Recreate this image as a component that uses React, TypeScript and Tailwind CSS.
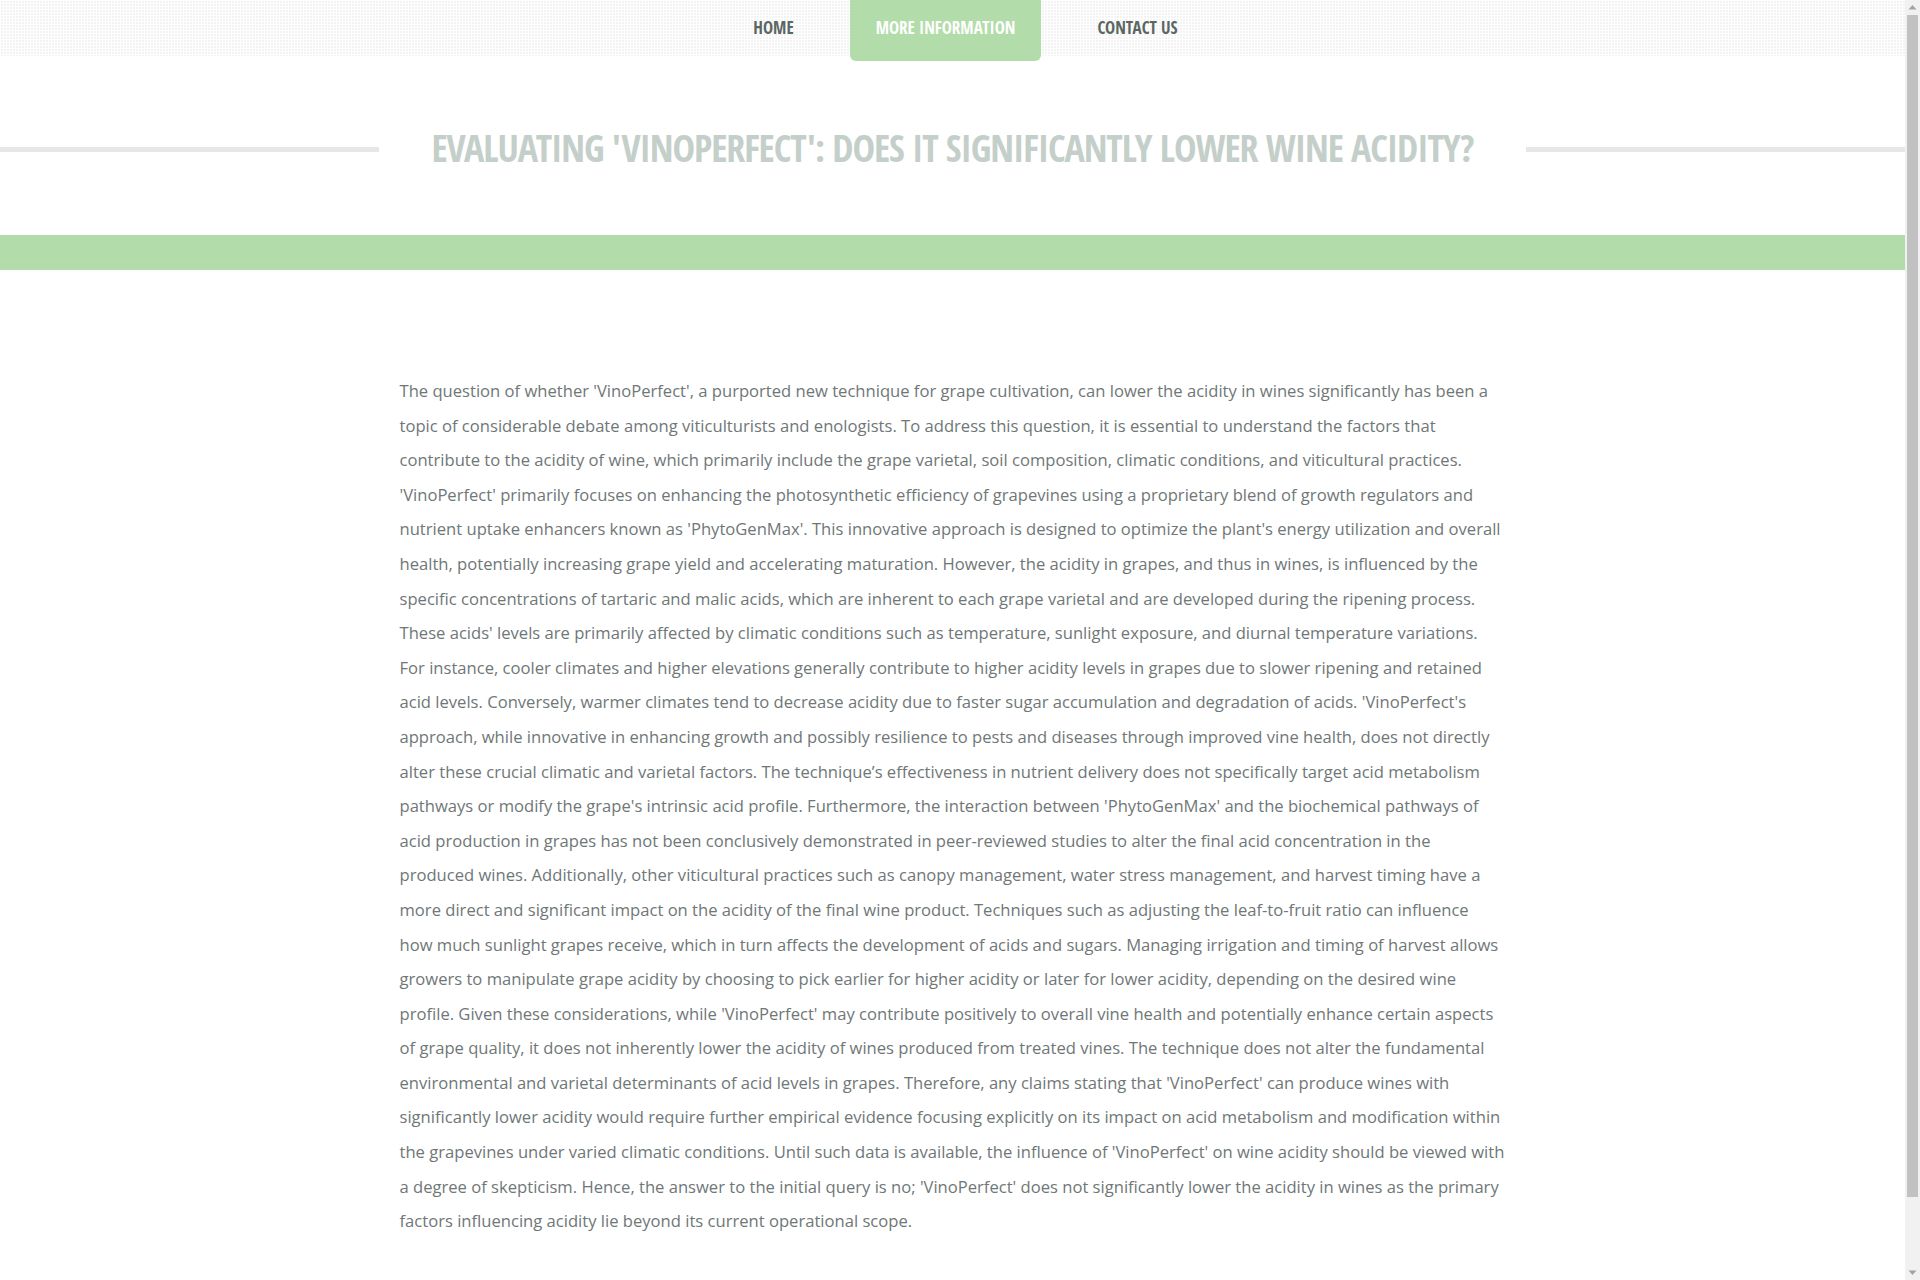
import React from "react";

const paragraph =
	"The question of whether 'VinoPerfect', a purported new technique for grape cultivation, can lower the acidity in wines significantly has been a topic of considerable debate among viticulturists and enologists. To address this question, it is essential to understand the factors that contribute to the acidity of wine, which primarily include the grape varietal, soil composition, climatic conditions, and viticultural practices. 'VinoPerfect' primarily focuses on enhancing the photosynthetic efficiency of grapevines using a proprietary blend of growth regulators and nutrient uptake enhancers known as 'PhytoGenMax'. This innovative approach is designed to optimize the plant's energy utilization and overall health, potentially increasing grape yield and accelerating maturation. However, the acidity in grapes, and thus in wines, is influenced by the specific concentrations of tartaric and malic acids, which are inherent to each grape varietal and are developed during the ripening process. These acids' levels are primarily affected by climatic conditions such as temperature, sunlight exposure, and diurnal temperature variations. For instance, cooler climates and higher elevations generally contribute to higher acidity levels in grapes due to slower ripening and retained acid levels. Conversely, warmer climates tend to decrease acidity due to faster sugar accumulation and degradation of acids. 'VinoPerfect's approach, while innovative in enhancing growth and possibly resilience to pests and diseases through improved vine health, does not directly alter these crucial climatic and varietal factors. The technique\u2019s effectiveness in nutrient delivery does not specifically target acid metabolism pathways or modify the grape's intrinsic acid profile. Furthermore, the interaction between 'PhytoGenMax' and the biochemical pathways of acid production in grapes has not been conclusively demonstrated in peer-reviewed studies to alter the final acid concentration in the produced wines. Additionally, other viticultural practices such as canopy management, water stress management, and harvest timing have a more direct and significant impact on the acidity of the final wine product. Techniques such as adjusting the leaf-to-fruit ratio can influence how much sunlight grapes receive, which in turn affects the development of acids and sugars. Managing irrigation and timing of harvest allows growers to manipulate grape acidity by choosing to pick earlier for higher acidity or later for lower acidity, depending on the desired wine profile. Given these considerations, while 'VinoPerfect' may contribute positively to overall vine health and potentially enhance certain aspects of grape quality, it does not inherently lower the acidity of wines produced from treated vines. The technique does not alter the fundamental environmental and varietal determinants of acid levels in grapes. Therefore, any claims stating that 'VinoPerfect' can produce wines with significantly lower acidity would require further empirical evidence focusing explicitly on its impact on acid metabolism and modification within the grapevines under varied climatic conditions. Until such data is available, the influence of 'VinoPerfect' on wine acidity should be viewed with a degree of skepticism. Hence, the answer to the initial query is no; 'VinoPerfect' does not significantly lower the acidity in wines as the primary factors influencing acidity lie beyond its current operational scope.";

const condensed = "font-['Open_Sans_Condensed','Open_Sans','Liberation_Sans_Narrow',sans-serif] font-bold font-stretch-condensed";

// page scrollbar as seen in the screenshot
const Scrollbar = () => (
	<div className="fixed top-0 right-0 flex h-screen w-[15px] flex-col items-center bg-[#f1f1f1]">
		<svg width="15" height="15" viewBox="0 0 15 15" className="shrink-0">
			<path d="M3.5 9.5 L7.5 5 L11.5 9.5 Z" fill="#a3a3a3" />
		</svg>
		<div className="h-[1182px] w-[11px] bg-[#c1c1c1]" />
		<div className="flex-1" />
		<svg width="15" height="15" viewBox="0 0 15 15" className="shrink-0">
			<path d="M3.5 5.5 L7.5 10 L11.5 5.5 Z" fill="#a3a3a3" />
		</svg>
	</div>
);

const App = () => {
	return (
		<div className="min-h-[1350px] bg-white pr-[15px] font-['Open_Sans',sans-serif]">
			{/* top nav */}
			<div className="h-[56px] bg-[#f3f3f3] bg-[linear-gradient(90deg,#ffffff_1px,transparent_1px),linear-gradient(#ffffff_1px,transparent_1px)] bg-[size:3px_3px]">
				<ul className="flex justify-center gap-[30px] pl-[26px]">
					<li>
						<a className={`${condensed} flex h-[56px] items-center px-[26px] text-[17px] uppercase text-[#5b6663]`}>
							Home
						</a>
					</li>
					<li>
						<a className={`${condensed} flex h-[61px] items-center rounded-b-[6px] bg-[#b2dcaa] px-[26px] pb-[5px] text-[17px] uppercase text-white`}>
							More Information
						</a>
					</li>
					<li>
						<a className={`${condensed} flex h-[56px] items-center px-[26px] text-[17px] uppercase text-[#5b6663]`}>
							Contact Us
						</a>
					</li>
				</ul>
			</div>

			{/* title */}
			<div className="mt-[64px] flex items-center gap-[52px]">
				<div className="mt-[5px] h-[5px] flex-1 bg-[#e6e8e6]" />
				<h1 className={`${condensed} text-[38px] leading-[54px] tracking-[-1.1px] uppercase text-[#c4cfca]`}>
					Evaluating 'VinoPerfect': Does It Significantly Lower Wine Acidity?
				</h1>
				<div className="mt-[5px] h-[5px] flex-1 bg-[#e6e8e6]" />
			</div>

			{/* band */}
			<div className="mt-[61px] h-[35px] bg-[#b2dcaa]" />

			{/* content */}
			<div className="mx-auto max-w-[1106px] pt-[104px] pb-[100px]">
				<p className="text-[16.6px] leading-[34.6px] text-[#6f7777]">{paragraph}</p>
			</div>

			<Scrollbar />
		</div>
	);
};

export default App;
